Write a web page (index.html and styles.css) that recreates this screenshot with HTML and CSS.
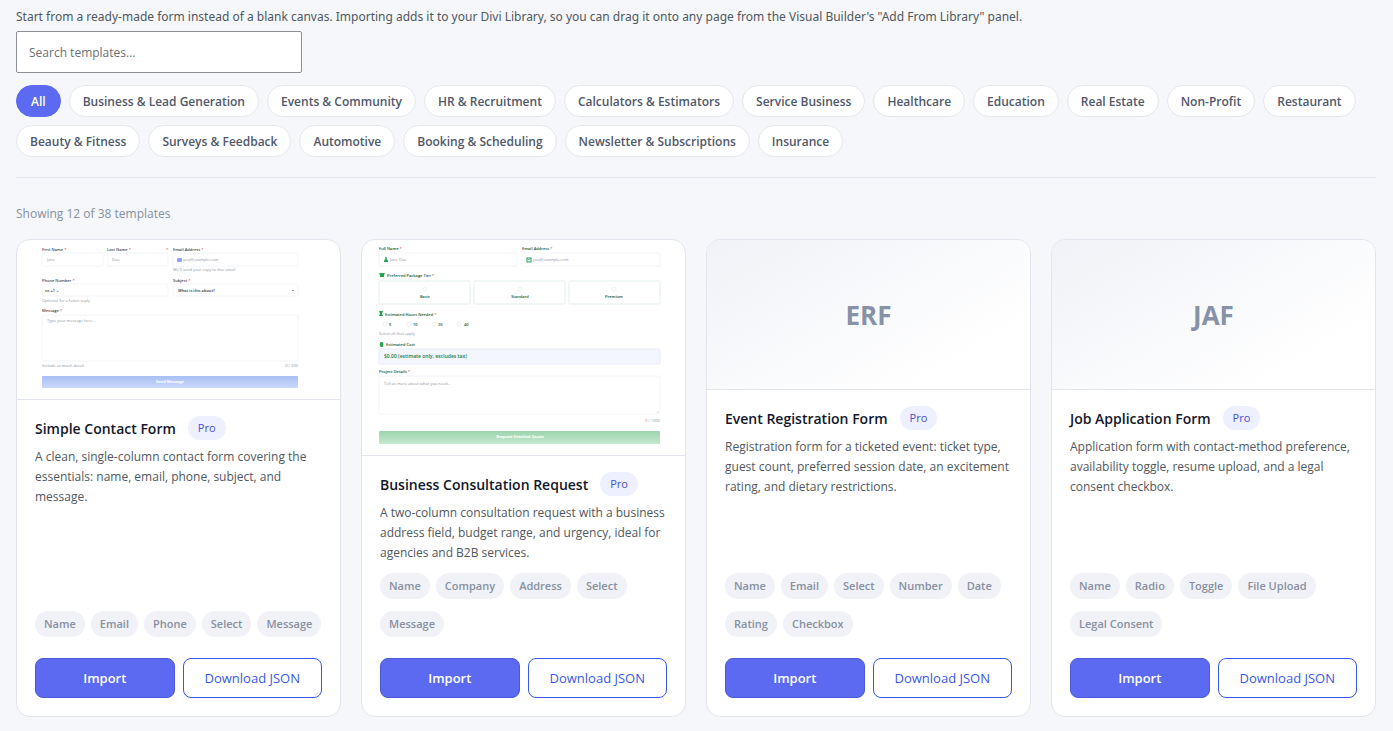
FILE: index.html
```html
<!DOCTYPE html>
<html lang="en">
<head>
  <meta charset="UTF-8">
  <meta name="viewport" content="width=device-width, initial-scale=1.0">
  <title>Form Templates</title>
  <link rel="stylesheet" href="styles.css">
</head>
<body>
  <main class="templates">
    <p class="intro">Start from a ready-made form instead of a blank canvas. Importing adds it to your Divi Library, so you can drag it onto any page from the Visual Builder's "Add From Library" panel.</p>
    <input class="search" type="search" placeholder="Search templates..." aria-label="Search templates">

    <div class="filters">
      <button class="filter active" type="button">All</button>
      <button class="filter" type="button">Business &amp; Lead Generation</button>
      <button class="filter" type="button">Events &amp; Community</button>
      <button class="filter" type="button">HR &amp; Recruitment</button>
      <button class="filter" type="button">Calculators &amp; Estimators</button>
      <button class="filter" type="button">Service Business</button>
      <button class="filter" type="button">Healthcare</button>
      <button class="filter" type="button">Education</button>
      <button class="filter" type="button">Real Estate</button>
      <button class="filter" type="button">Non-Profit</button>
      <button class="filter" type="button">Restaurant</button>
      <button class="filter" type="button">Beauty &amp; Fitness</button>
      <button class="filter" type="button">Surveys &amp; Feedback</button>
      <button class="filter" type="button">Automotive</button>
      <button class="filter" type="button">Booking &amp; Scheduling</button>
      <button class="filter" type="button">Newsletter &amp; Subscriptions</button>
      <button class="filter" type="button">Insurance</button>
    </div>

    <p class="count">Showing 12 of 38 templates</p>

    <div class="grid">
      <article class="card">
        <div class="thumb">
          <svg viewBox="0 0 323 159" role="img" aria-label="Simple Contact Form preview">
            <defs>
              <linearGradient id="blueBtn" x1="0" y1="0" x2="0" y2="1">
                <stop offset="0" stop-color="#a9bff3"/>
                <stop offset="1" stop-color="#c9d8fb"/>
              </linearGradient>
            </defs>
            <g class="preview-box">
              <rect x="25" y="13" width="61" height="13" rx="1"/>
              <rect x="91" y="13" width="60" height="13" rx="1"/>
              <rect x="156" y="13" width="125" height="13" rx="1"/>
              <rect x="25" y="44" width="126" height="12" rx="1"/>
              <rect x="156" y="44" width="125" height="12" rx="1"/>
              <rect x="25" y="75" width="256" height="46" rx="1"/>
            </g>
            <g class="preview-label">
              <text x="25" y="11">First Name <tspan class="req">*</tspan></text>
              <text x="90" y="11">Last Name <tspan class="req">*</tspan></text>
              <text x="149" y="11" class="req">*</text>
              <text x="156" y="11">Email Address <tspan class="req">*</tspan></text>
              <text x="25" y="42">Phone Number <tspan class="req">*</tspan></text>
              <text x="156" y="42">Subject <tspan class="req">*</tspan></text>
              <text x="25" y="72">Message <tspan class="req">*</tspan></text>
            </g>
            <rect x="160" y="18" width="5" height="4" rx="1" fill="#8fa4ee"/>
            <g class="preview-hint">
              <text x="30" y="21">Jane</text>
              <text x="95" y="21">Doe</text>
              <text x="166" y="21">you@example.com</text>
              <text x="156" y="31">We'll send your copy to this email</text>
              <text x="25" y="62">Optional for a faster reply</text>
              <text x="30" y="82">Type your message here...</text>
              <text x="25" y="127">Include as much detail</text>
              <text x="281" y="127" text-anchor="end">0 / 500</text>
            </g>
            <text x="28" y="52" class="preview-value">us +1 ⌄</text>
            <text x="161" y="52" class="preview-value">What is this about?</text>
            <path d="M275 50l1 1 1-1" fill="none" stroke="#555" stroke-width=".6"/>
            <rect x="25" y="136" width="256" height="12" rx="1" fill="url(#blueBtn)"/>
            <text x="153" y="143" class="preview-submit">Send Message</text>
          </svg>
        </div>
        <div class="body">
          <div class="title-row">
            <h3>Simple Contact Form</h3>
            <span class="badge">Pro</span>
          </div>
          <p class="desc">A clean, single-column contact form covering the essentials: name, email, phone, subject, and message.</p>
          <ul class="tags">
            <li>Name</li>
            <li>Email</li>
            <li>Phone</li>
            <li>Select</li>
            <li>Message</li>
          </ul>
          <div class="actions">
            <button class="btn primary" type="button">Import</button>
            <button class="btn" type="button">Download JSON</button>
          </div>
        </div>
      </article>

      <article class="card">
        <div class="thumb">
          <svg viewBox="0 0 323 215" role="img" aria-label="Business Consultation Request preview">
            <defs>
              <linearGradient id="greenBtn" x1="0" y1="0" x2="0" y2="1">
                <stop offset="0" stop-color="#9bd5ad"/>
                <stop offset="1" stop-color="#c5e8d0"/>
              </linearGradient>
            </defs>
            <g class="preview-box">
              <rect x="17" y="13" width="138" height="13" rx="1"/>
              <rect x="160" y="13" width="138" height="13" rx="1"/>
              <rect x="17" y="136" width="281" height="38" rx="1"/>
            </g>
            <g class="preview-box mint">
              <rect x="17" y="41" width="91" height="23" rx="1"/>
              <rect x="112" y="41" width="91" height="23" rx="1"/>
              <rect x="207" y="41" width="91" height="23" rx="1"/>
            </g>
            <g class="preview-radio">
              <circle cx="63" cy="49" r="2"/>
              <circle cx="158" cy="49" r="2"/>
              <circle cx="252" cy="49" r="2"/>
              <circle cx="23" cy="84" r="2"/>
              <circle cx="47" cy="84" r="2"/>
              <circle cx="72" cy="84" r="2"/>
              <circle cx="97" cy="84" r="2"/>
            </g>
            <g class="preview-label green">
              <text x="17" y="10">Full Name <tspan class="req">*</tspan></text>
              <text x="160" y="10">Email Address <tspan class="req">*</tspan></text>
              <text x="25" y="37">Preferred Package Tier <tspan class="req">*</tspan></text>
              <text x="23" y="76">Estimated Hours Needed <tspan class="req">*</tspan></text>
              <text x="24" y="106">Estimated Cost</text>
              <text x="17" y="133">Project Details <tspan class="req">*</tspan></text>
              <text x="63" y="58" text-anchor="middle">Basic</text>
              <text x="158" y="58" text-anchor="middle">Standard</text>
              <text x="252" y="58" text-anchor="middle">Premium</text>
              <text x="27" y="86">5</text>
              <text x="51" y="86">10</text>
              <text x="76" y="86">20</text>
              <text x="102" y="86">40</text>
            </g>
            <g fill="#23a550">
              <circle cx="24" cy="18" r="1"/>
              <path d="M22 22q0-3 2-3t2 3z"/>
              <path d="M17 33h6l-1 2v2h-4v-2z"/>
              <path d="M17 71h4l-1 2.500 1 2.500h-4l1-2.500z"/>
              <rect x="18" y="102" width="3" height="5" rx="1"/>
            </g>
            <rect x="165" y="18" width="4" height="4" fill="none" stroke="#23a550"/>
            <path d="M165 18l2 2 2-2" fill="none" stroke="#23a550" stroke-width=".6"/>
            <g class="preview-hint">
              <text x="28" y="21">Jane Doe</text>
              <text x="171" y="21">you@example.com</text>
              <text x="17" y="95">Select all that apply</text>
              <text x="22" y="145">Tell us more about what you need...</text>
              <text x="298" y="182" text-anchor="end">0 / 1000</text>
            </g>
            <rect x="17" y="109" width="281" height="15" rx="1" fill="#f4f6fd" stroke="#e8ebf5"/>
            <text x="22" y="118" class="preview-total">$0.00 (estimate only, excludes tax)</text>
            <path d="M295 173l2-2" stroke="#aaa" stroke-width=".5"/>
            <rect x="17" y="191" width="281" height="13" rx="1" fill="url(#greenBtn)"/>
            <text x="158" y="198" class="preview-submit">Request Detailed Quote</text>
          </svg>
        </div>
        <div class="body">
          <div class="title-row">
            <h3>Business Consultation Request</h3>
            <span class="badge">Pro</span>
          </div>
          <p class="desc">A two-column consultation request with a business address field, budget range, and urgency, ideal for agencies and B2B services.</p>
          <ul class="tags">
            <li>Name</li>
            <li>Company</li>
            <li>Address</li>
            <li>Select</li>
            <li>Message</li>
          </ul>
          <div class="actions">
            <button class="btn primary" type="button">Import</button>
            <button class="btn" type="button">Download JSON</button>
          </div>
        </div>
      </article>

      <article class="card">
        <div class="thumb placeholder">ERF</div>
        <div class="body">
          <div class="title-row">
            <h3>Event Registration Form</h3>
            <span class="badge">Pro</span>
          </div>
          <p class="desc">Registration form for a ticketed event: ticket type, guest count, preferred session date, an excitement rating, and dietary restrictions.</p>
          <ul class="tags">
            <li>Name</li>
            <li>Email</li>
            <li>Select</li>
            <li>Number</li>
            <li>Date</li>
            <li>Rating</li>
            <li>Checkbox</li>
          </ul>
          <div class="actions">
            <button class="btn primary" type="button">Import</button>
            <button class="btn" type="button">Download JSON</button>
          </div>
        </div>
      </article>

      <article class="card">
        <div class="thumb placeholder">JAF</div>
        <div class="body">
          <div class="title-row">
            <h3>Job Application Form</h3>
            <span class="badge">Pro</span>
          </div>
          <p class="desc">Application form with contact-method preference, availability toggle, resume upload, and a legal consent checkbox.</p>
          <ul class="tags">
            <li>Name</li>
            <li>Radio</li>
            <li>Toggle</li>
            <li>File Upload</li>
            <li>Legal Consent</li>
          </ul>
          <div class="actions">
            <button class="btn primary" type="button">Import</button>
            <button class="btn" type="button">Download JSON</button>
          </div>
        </div>
      </article>
    </div>
  </main>
</body>
</html>
```
FILE: styles.css
```css
* {
  box-sizing: border-box;
}

body {
  margin: 0;
  font-family: "Segoe UI", "Open Sans", "Noto Sans", sans-serif;
  font-size: 12px;
  color: #50575e;
  background: #f5f7fb;
}

button, input {
  font-family: inherit;
}

.templates {
  padding: 7px 17px 14px 16px;
}

.intro {
  margin: 0 0 4px;
  font-family: "Segoe UI", "Noto Sans", sans-serif;
  line-height: 20px;
}

.search {
  display: block;
  width: 286px;
  height: 42px;
  padding: 0 12px;
  font-size: 12px;
  color: #333;
  background: #fff;
  border: 1px solid #8c8f94;
  border-radius: 2px;
  appearance: none;
}

.search::placeholder {
  color: #6b6f76;
}

.filters {
  display: flex;
  flex-wrap: wrap;
  gap: 8px;
  margin-top: 12px;
  padding-bottom: 20px;
  border-bottom: 1px solid #e2e5ec;
}

.filter {
  height: 32px;
  padding: 0 13px;
  font-size: 12px;
  font-weight: 600;
  color: #50586a;
  background: #fff;
  border: 1px solid #e5e7ef;
  border-radius: 16px;
  cursor: pointer;
}

.filter.active {
  padding: 0 14px;
  color: #fff;
  background: #5b6af0;
  border-color: #5b6af0;
}

.count {
  margin: 26px 0 15px;
  line-height: 20px;
  color: #8790a0;
}

.grid {
  display: grid;
  grid-template-columns: repeat(4, 1fr);
  gap: 20px;
}

.card {
  display: flex;
  flex-direction: column;
  overflow: hidden;
  background: #fff;
  border: 1px solid #e2e5ee;
  border-radius: 14px;
}

.thumb {
  border-bottom: 1px solid #e2e5ee;
}

.thumb svg {
  display: block;
  width: 100%;
}

.placeholder {
  display: flex;
  align-items: center;
  justify-content: center;
  height: 150px;
  font-size: 26px;
  font-weight: 700;
  color: #8792a6;
  background: linear-gradient(150deg, #f0f2f7, #fff 80%);
}

.body {
  display: flex;
  flex: 1;
  flex-direction: column;
  padding: 16px 18px 18px;
}

.title-row {
  display: flex;
  align-items: flex-start;
  gap: 12px;
}

h3 {
  margin: 0;
  font-size: 14px;
  font-weight: 600;
  line-height: 26px;
  color: #12172b;
}

.badge {
  padding: 0 10px;
  font-size: 11px;
  font-weight: 500;
  line-height: 24px;
  color: #4a50d8;
  background: #eeefff;
  border-radius: 12px;
}

.desc {
  margin: 5px 0 10px;
  line-height: 20px;
}

.tags {
  display: flex;
  flex-wrap: wrap;
  gap: 12px 6px;
  margin: auto 0 21px;
  padding: 0;
  list-style: none;
}

.tags li {
  padding: 0 9px;
  font-size: 11px;
  font-weight: 600;
  line-height: 26px;
  color: #8790a0;
  background: #f1f2f8;
  border-radius: 13px;
}

.actions {
  display: flex;
  gap: 8px;
}

.btn {
  flex: 1;
  height: 40px;
  padding: 0;
  font-size: 13px;
  font-weight: 500;
  color: #3858e9;
  background: #fff;
  border: 1px solid #3858e9;
  border-radius: 8px;
  cursor: pointer;
}

.btn.primary {
  font-weight: 600;
  color: #fff;
  background: #5b6af0;
  border-color: #4b59d8;
}

/* miniature form previews */
.preview-label {
  font-size: 4px;
  font-weight: 600;
  fill: #3c434f;
}

.preview-label.green {
  fill: #14532d;
}

.preview-label .req {
  fill: #e05252;
}

.preview-hint {
  font-size: 4px;
  fill: #8b95a3;
}

.preview-value {
  font-size: 4px;
  font-weight: 600;
  fill: #333;
}

.preview-total {
  font-size: 5px;
  font-weight: 600;
  fill: #167a4a;
}

.preview-submit {
  font-size: 4px;
  font-weight: 700;
  text-anchor: middle;
  fill: #fff;
}

.preview-box {
  fill: #fff;
  stroke: #f3f4f7;
}

.preview-box.mint {
  stroke: #e3f0e8;
}

.preview-radio {
  fill: #fff;
  stroke: #edf2ef;
}
```
